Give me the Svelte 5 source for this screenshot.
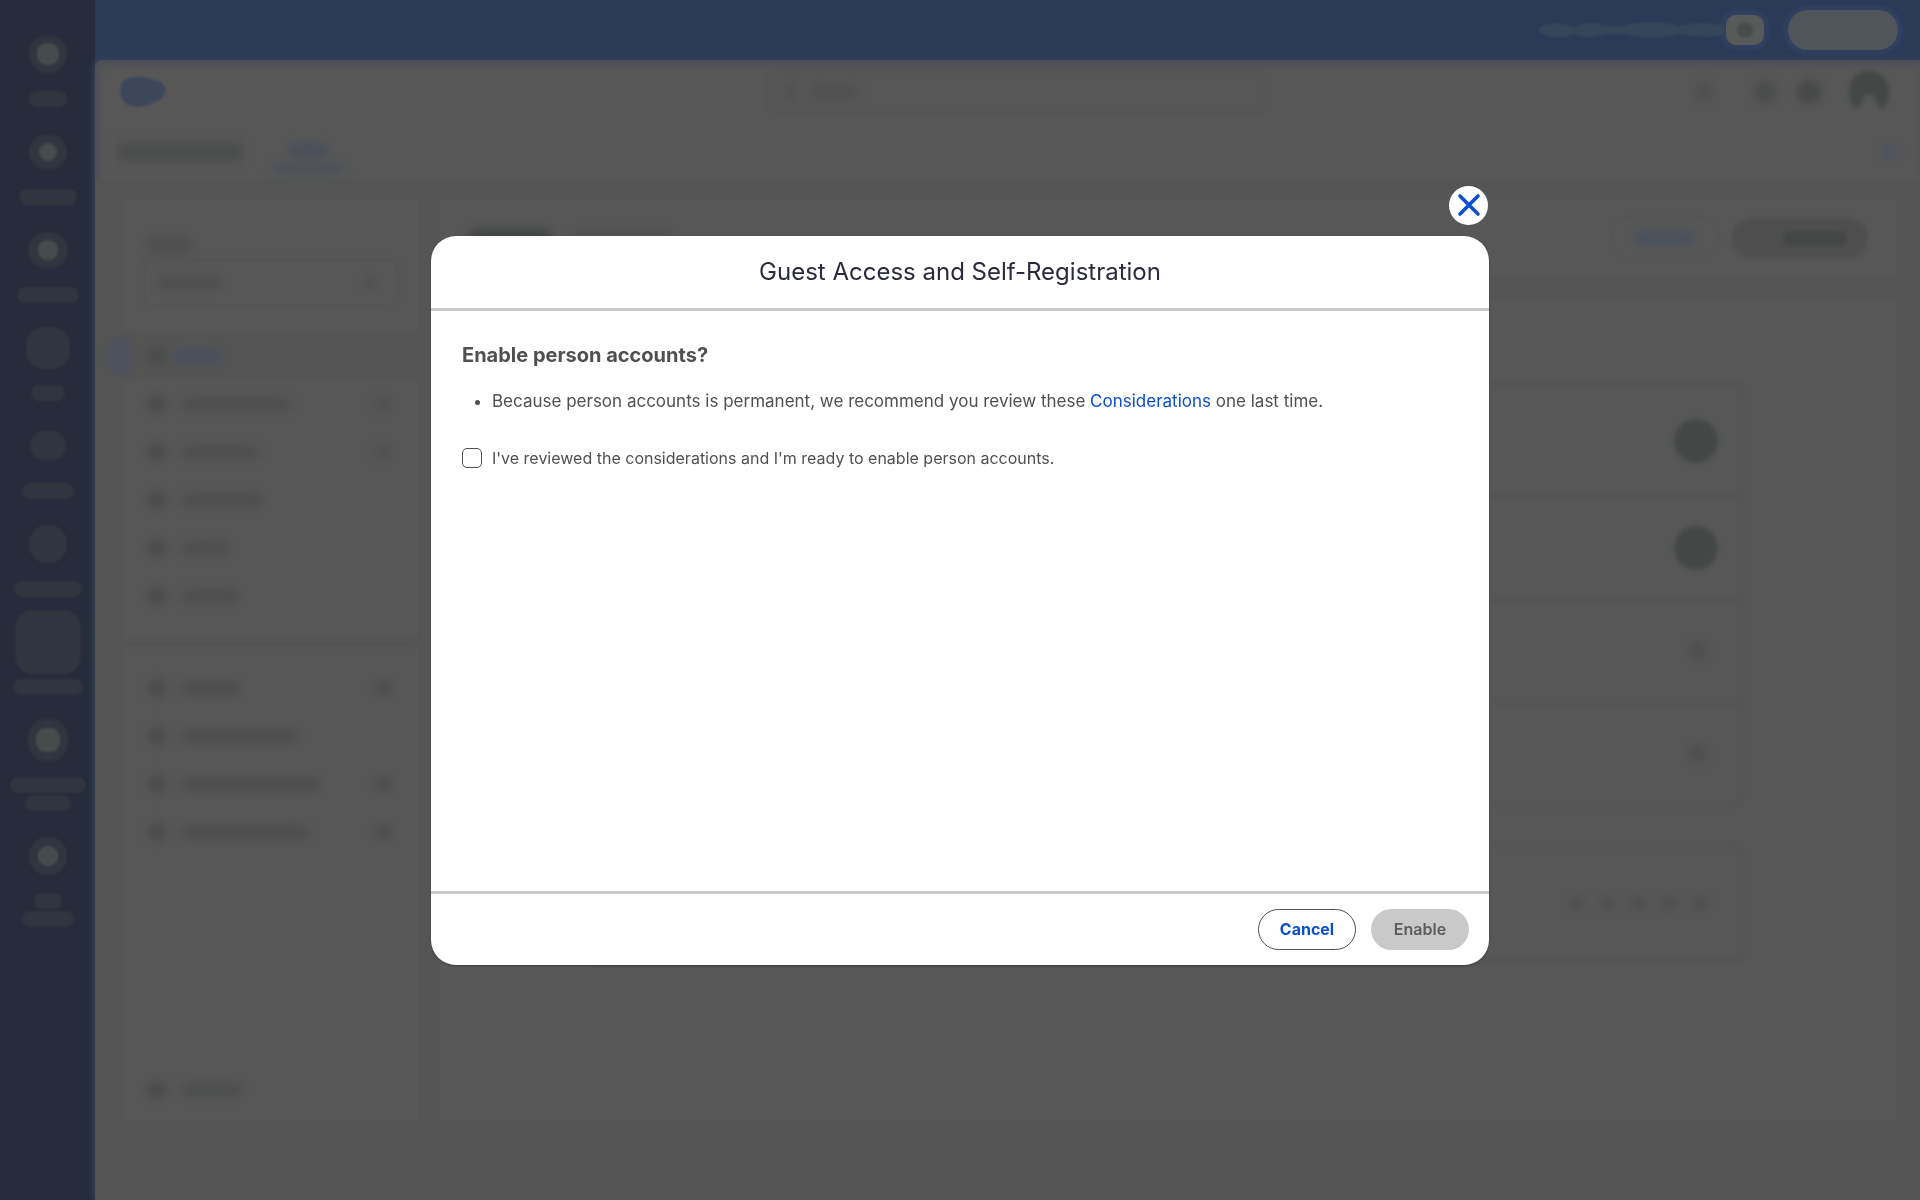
<script lang="ts">
	type RailItem = { w: number; h: number; core?: number; labels: number[] };
	type NavItem = { w: number; extra?: boolean; active?: boolean };

	const railItems: RailItem[] = [
		{ w: 38, h: 38, core: 22, labels: [38] },
		{ w: 38, h: 34, core: 18, labels: [58] },
		{ w: 40, h: 36, core: 20, labels: [62] },
		{ w: 44, h: 42, labels: [34] },
		{ w: 36, h: 30, labels: [52] },
		{ w: 38, h: 38, labels: [68] },
		{ w: 66, h: 64, labels: [70] },
		{ w: 40, h: 42, core: 24, labels: [76, 46] },
		{ w: 38, h: 38, core: 20, labels: [28, 52] }
	];

	const primaryNav: NavItem[] = [
		{ w: 52, active: true },
		{ w: 110, extra: true },
		{ w: 78, extra: true },
		{ w: 82 },
		{ w: 48 },
		{ w: 58 }
	];

	const secondaryNav: NavItem[] = [
		{ w: 60, extra: true },
		{ w: 118 },
		{ w: 140, extra: true },
		{ w: 128, extra: true }
	];

	let reviewed = $state(false);
	let open = $state(true);
</script>

{#snippet navRow(item: NavItem)}
	<div class="nav-row" class:active={item.active}>
		<span class="mark nav-icon"></span>
		<span class="mark nav-text" style="width: {item.w}px"></span>
		{#if item.extra}
			<span class="mark nav-extra"></span>
		{/if}
	</div>
{/snippet}

<div class="app" aria-hidden="true">
	<div class="rail">
		{#each railItems as item}
			<div class="rail-item">
				<div class="rail-slot">
					<span class="rail-icon" style="width: {item.w}px; height: {item.h}px">
						{#if item.core}
							<span class="rail-core" style="width: {item.core}px; height: {item.core}px"></span>
						{/if}
					</span>
				</div>
				<div class="rail-labels">
					{#each item.labels as width}
						<span class="rail-label" style="width: {width}px"></span>
					{/each}
				</div>
			</div>
		{/each}
	</div>

	<div class="workspace">
		<div class="trial-bar">
			<svg class="trial-text" viewBox="0 0 190 20" width="190" height="20">
				<path d="M2 10C6 2 26 1 38 7C48 2 58 1 68 6L88 6C98 1 126 1 142 6C156 2 176 3 188 5V15C170 18 160 17 142 14C130 19 104 19 90 14H70C58 19 46 17 38 14C28 19 8 19 2 10Z" />
			</svg>
			<span class="trial-days"><span class="trial-digit"></span></span>
			<span class="trial-cta"></span>
		</div>

		<div class="page">
			<div class="page-header">
				<svg class="logo" viewBox="0 0 46 32" width="46" height="32">
					<path d="M0 14C1 4 9 0 18 1C24 0 28 3 34 4C41 5 46 9 45 15C45 22 39 25 32 27C25 31 18 32 11 30C4 28 0 22 0 14Z" />
				</svg>
				<div class="search">
					<span class="mark search-icon"></span>
					<span class="mark search-text"></span>
				</div>
				<div class="header-icons">
					<span class="mark dot faint"></span>
					<span class="mark dot"></span>
					<span class="mark dot strong"></span>
					<svg class="avatar" viewBox="0 0 44 44" width="44" height="44">
						<path d="M22 1A20 20 0 0 0 2 22Q2 34 8 38Q13 38 15 32Q17 24 22 24T29 32Q31 38 36 38Q42 34 42 22A20 20 0 0 0 22 1Z" />
					</svg>
				</div>
			</div>

			<div class="tabs">
				<span class="mark tab-name"></span>
				<span class="tab-active">
					<span class="mark tab-text"></span>
					<span class="mark tab-line"></span>
				</span>
				<span class="mark pencil"></span>
			</div>

			<div class="columns">
				<div class="sidebar">
					<span class="mark picker-label"></span>
					<div class="picker">
						<span class="mark picker-text"></span>
						<span class="mark picker-arrow"></span>
					</div>
					<div class="nav-group">
						{#each primaryNav as item}
							{@render navRow(item)}
						{/each}
					</div>
					<div class="divider"></div>
					<div class="nav-group second">
						{#each secondaryNav as item}
							{@render navRow(item)}
						{/each}
					</div>
					<div class="nav-bottom">
						{@render navRow({ w: 62 })}
					</div>
				</div>

				<div class="main">
					<div class="title-card">
						<span class="mark title-text"></span>
						<span class="mark title-sub"></span>
						<span class="preview"><span class="mark preview-text"></span></span>
						<span class="publish"><span class="publish-text"></span></span>
					</div>
					<div class="body-card">
						<div class="steps">
							{#each [true, true, false, false] as done}
								<div class="step">
									<span class="step-mark" class:done></span>
								</div>
							{/each}
						</div>
						<div class="rating">
							{#each Array(5) as _}
								<span class="mark star"></span>
							{/each}
						</div>
					</div>
				</div>
			</div>
		</div>
	</div>
</div>

{#if open}
	<div class="overlay">
		<div class="modal" role="dialog" aria-modal="true" aria-labelledby="modal-title">
			<button class="close" type="button" aria-label="Close" onclick={() => (open = false)}>
				<svg viewBox="0 0 24 24" width="24" height="24" aria-hidden="true">
					<path d="M3 3L21 21M21 3L3 21" fill="none" stroke="#0b50d0" stroke-width="3.6" stroke-linecap="round" />
				</svg>
			</button>

			<header class="modal-header">
				<h1 id="modal-title">Guest Access and Self-Registration</h1>
			</header>

			<div class="modal-body">
				<h2>Enable person accounts?</h2>
				<ul>
					<li>
						Because person accounts is permanent, we recommend you review these
						<a href="#considerations">Considerations</a> one last time.
					</li>
				</ul>
				<label class="confirm">
					<input type="checkbox" bind:checked={reviewed} />
					<span>I've reviewed the considerations and I'm ready to enable person accounts.</span>
				</label>
			</div>

			<footer class="modal-footer">
				<button class="btn cancel" type="button" onclick={() => (open = false)}>Cancel</button>
				<button class="btn enable" type="button" disabled={!reviewed}>Enable</button>
			</footer>
		</div>
	</div>
{/if}

<style>
	:global(body) {
		margin: 0;
		background: #565656;
	}

	.app {
		display: flex;
		min-height: 100vh;
		overflow: hidden;
		background: #565656;
	}

	.mark {
		display: block;
		flex: none;
		border-radius: 10px;
		background: #4d4f4e;
		filter: blur(4px);
	}

	/* left rail */
	.rail {
		display: flex;
		flex-direction: column;
		gap: 25px;
		flex: none;
		width: 95px;
		box-sizing: border-box;
		padding-top: 34px;
		background: #262c3b;
	}

	.rail-item {
		display: flex;
		flex-direction: column;
		align-items: center;
		gap: 17px;
	}

	.rail-slot {
		display: flex;
		align-items: center;
		justify-content: center;
		height: 40px;
	}

	.rail-icon {
		display: flex;
		align-items: center;
		justify-content: center;
		flex: none;
		border-radius: 18px;
		background: #313540;
		filter: blur(1px);
	}

	.rail-core {
		border-radius: 9px;
		background: #464b4b;
	}

	.rail-labels {
		display: flex;
		flex-direction: column;
		align-items: center;
		gap: 2px;
	}

	.rail-label {
		height: 16px;
		border-radius: 8px;
		background: #313540;
		filter: blur(1px);
	}

	/* top bar */
	.workspace {
		display: flex;
		flex-direction: column;
		flex: 1;
		min-width: 0;
		background: #2b3a57;
	}

	.trial-bar {
		display: flex;
		align-items: center;
		justify-content: flex-end;
		height: 60px;
		box-sizing: border-box;
		padding-right: 22px;
	}

	.trial-text {
		fill: #35465a;
		filter: blur(1px);
	}

	.trial-days {
		display: flex;
		align-items: center;
		justify-content: center;
		width: 38px;
		height: 30px;
		margin-right: 24px;
		border-radius: 10px;
		background: #575a58;
		box-shadow: 0 0 3px 5px #324060;
	}

	.trial-digit {
		width: 16px;
		height: 14px;
		border-radius: 7px;
		background: #484c4a;
		filter: blur(1px);
	}

	.trial-cta {
		width: 110px;
		height: 40px;
		border-radius: 20px;
		background: #50545b;
		box-shadow: 0 0 3px 5px #324060;
	}

	.page {
		display: flex;
		flex-direction: column;
		flex: 1;
		border-radius: 8px 0 0 0;
		background: #575757;
		box-shadow: inset 3px 5px 6px #4a4e57, 0 0 6px 1px #3c485a;
	}

	.page-header {
		display: grid;
		grid-template-columns: 51fr 508px 49fr;
		align-items: center;
		height: 64px;
		padding: 0 29px 0 25px;
	}

	.logo {
		fill: #3d475c;
		filter: blur(1px);
	}

	.search {
		display: flex;
		align-items: center;
		gap: 14px;
		height: 48px;
		box-sizing: border-box;
		padding-left: 20px;
		border-radius: 16px;
		box-shadow: inset 0 0 8px 3px #555555;
	}

	.search-icon {
		width: 12px;
		height: 16px;
		background: #505050;
	}

	.search-text {
		width: 48px;
		height: 14px;
		background: #505050;
	}

	.header-icons {
		display: flex;
		align-items: center;
		justify-content: flex-end;
		gap: 20px;
	}

	.dot {
		width: 24px;
		height: 24px;
		border-radius: 12px;
		background: #4b4d4c;
	}

	.dot.faint {
		width: 18px;
		margin-right: 20px;
		background: #515151;
	}

	.dot.strong {
		background: #464948;
	}

	.avatar {
		margin-left: 6px;
		fill: #434847;
		filter: blur(2px);
	}

	.tabs {
		display: flex;
		align-items: center;
		height: 56px;
		padding: 0 22px;
	}

	.tab-name {
		width: 126px;
		height: 20px;
		border-radius: 4px;
		background: #4c4e4d;
	}

	.tab-active {
		display: flex;
		flex-direction: column;
		align-items: center;
		gap: 4px;
		margin-left: 28px;
		padding-top: 14px;
	}

	.tab-text {
		width: 42px;
		height: 16px;
		background: #4b505a;
	}

	.tab-line {
		width: 74px;
		height: 12px;
		background: #4d525a;
	}

	.pencil {
		width: 18px;
		height: 18px;
		margin-left: auto;
		background: #4c545e;
	}

	.columns {
		display: flex;
		gap: 22px;
		flex: 1;
		padding: 20px 25px 80px 28px;
		background: #555555;
		box-shadow: inset 6px 0 6px #535555;
	}

	/* sidebar */
	.sidebar {
		display: flex;
		flex-direction: column;
		flex: none;
		width: 295px;
		box-sizing: border-box;
		padding-top: 36px;
		background: #575757;
		box-shadow: 0 0 6px #575757;
	}

	.picker-label {
		width: 48px;
		height: 18px;
		margin-left: 22px;
		background: #505050;
	}

	.picker {
		display: flex;
		align-items: center;
		justify-content: space-between;
		height: 42px;
		box-sizing: border-box;
		margin: 8px 22px 0;
		padding: 0 20px 0 12px;
		border-radius: 8px;
		box-shadow: 0 0 6px 2px #545454;
	}

	.picker-text {
		width: 64px;
		height: 14px;
		background: #4f4f4f;
	}

	.picker-arrow {
		width: 12px;
		height: 12px;
	}

	.nav-group {
		margin-top: 28px;
	}

	.divider {
		height: 6px;
		margin-top: 20px;
		background: #535353;
		filter: blur(2px);
	}

	.nav-group.second {
		margin-top: 18px;
	}

	.nav-row {
		position: relative;
		display: flex;
		align-items: center;
		gap: 14px;
		height: 48px;
		box-sizing: border-box;
		padding: 0 26px 0 24px;
	}

	.nav-row.active {
		gap: 4px;
		background: #545454;
	}

	/* selection marker overhangs the panel edge */
	.nav-row.active::before {
		content: '';
		position: absolute;
		left: -14px;
		width: 22px;
		height: 40px;
		border-radius: 11px;
		background: #4e515e;
		filter: blur(3px);
	}

	.nav-icon {
		width: 20px;
		height: 18px;
		background: #4a4c4b;
	}

	.nav-text {
		height: 15px;
	}

	.nav-row.active .nav-text {
		background: #4a515c;
	}

	.nav-extra {
		width: 18px;
		height: 16px;
		margin-left: auto;
		background: #515151;
	}

	.second .nav-extra {
		background: #4e4e4e;
	}

	.nav-bottom {
		margin-top: auto;
		padding-bottom: 6px;
	}

	/* main column */
	.main {
		display: flex;
		flex-direction: column;
		gap: 24px;
		flex: 1;
		min-width: 0;
	}

	.title-card {
		display: flex;
		align-items: center;
		height: 76px;
		padding: 0 28px;
		background: #575757;
	}

	.title-text {
		width: 84px;
		height: 20px;
		background: #434746;
	}

	.title-sub {
		width: 100px;
		height: 18px;
		margin-left: 20px;
		background: #515151;
	}

	.preview {
		display: flex;
		align-items: center;
		justify-content: center;
		width: 104px;
		height: 38px;
		margin: 0 16px 0 auto;
		border-radius: 19px;
		box-shadow: 0 0 4px 1px #555555;
	}

	.preview-text {
		width: 62px;
		height: 14px;
		background: #4a515c;
	}

	.publish {
		display: flex;
		align-items: center;
		justify-content: flex-end;
		width: 134px;
		height: 40px;
		box-sizing: border-box;
		padding-right: 20px;
		border-radius: 18px;
		background: #4e4e4e;
		filter: blur(2px);
	}

	.publish-text {
		width: 64px;
		height: 15px;
		border-radius: 7px;
		background: #434746;
	}

	.body-card {
		flex: 1;
		padding: 81px 150px 0;
		background: #575757;
	}

	.steps {
		border: 8px solid #555555;
		border-radius: 10px;
		filter: blur(1px);
	}

	.step {
		display: flex;
		align-items: center;
		justify-content: flex-end;
		height: 103px;
		box-sizing: border-box;
		padding-right: 19px;
	}

	.step + .step {
		border-top: 8px solid #555555;
	}

	.step-mark {
		width: 20px;
		height: 20px;
		margin: 0 10px;
		border-radius: 22px;
		background: #505050;
		filter: blur(4px);
	}

	.step-mark.done {
		width: 44px;
		height: 44px;
		margin: 0;
		background: #434847;
		filter: blur(2px);
	}

	.rating {
		display: flex;
		align-items: center;
		justify-content: flex-end;
		gap: 16px;
		height: 124px;
		box-sizing: border-box;
		margin-top: 32px;
		padding-right: 29px;
		border: 8px solid #555555;
		border-radius: 10px;
		filter: blur(1px);
	}

	.star {
		width: 15px;
		height: 15px;
	}

	/* dialog */
	.overlay {
		position: fixed;
		inset: 0;
		display: flex;
		align-items: center;
		justify-content: center;
		font-family: Inter, 'Liberation Sans', sans-serif;
	}

	.modal {
		position: relative;
		display: flex;
		flex-direction: column;
		width: 100%;
		max-width: 1058px;
		min-height: 729px;
		border-radius: 25px;
		background: #ffffff;
		color: #505050;
		box-shadow: 0 1px 2px rgba(0, 0, 0, 0.3);
	}

	.close {
		position: absolute;
		top: -50px;
		right: 1px;
		display: flex;
		align-items: center;
		justify-content: center;
		width: 39px;
		height: 39px;
		padding: 0;
		border: none;
		border-radius: 50%;
		background: #ffffff;
		cursor: pointer;
	}

	.modal-header {
		display: flex;
		align-items: center;
		justify-content: center;
		height: 72px;
		border-bottom: 3px solid #c9c9c9;
	}

	h1 {
		margin: 0;
		font-size: 24px;
		font-weight: 400;
		line-height: 32px;
		color: #2a2b3c;
	}

	.modal-body {
		flex: 1;
		padding: 30px 31px;
	}

	h2 {
		margin: 0;
		font-size: 20px;
		font-weight: 700;
		line-height: 28px;
	}

	ul {
		margin: 18px 0 0;
		padding-left: 30px;
		font-size: 17px;
		line-height: 28px;
	}

	a {
		color: #0b4fc4;
		text-decoration: none;
	}

	.confirm {
		display: flex;
		align-items: center;
		gap: 10px;
		margin-top: 29px;
		font-size: 16px;
		line-height: 28px;
	}

	.confirm input {
		appearance: none;
		flex: none;
		width: 20px;
		height: 20px;
		box-sizing: border-box;
		margin: 0;
		border: 1px solid #505050;
		border-radius: 5px;
		background: #ffffff;
	}

	.confirm input:checked {
		background: #0b4fc4;
	}

	.modal-footer {
		display: flex;
		align-items: center;
		justify-content: flex-end;
		gap: 15px;
		height: 71px;
		padding: 0 20px;
		border-top: 3px solid #c9c9c9;
	}

	.btn {
		width: 98px;
		height: 41px;
		padding: 0;
		border-radius: 21px;
		font-family: inherit;
		font-size: 16px;
		line-height: 24px;
	}

	.cancel {
		border: 1px solid #505050;
		background: #ffffff;
		color: #0b4fc4;
		font-weight: 700;
	}

	.enable {
		border: none;
		background: #c9c9c9;
		color: #5c5c5c;
		font-weight: 600;
	}
</style>
